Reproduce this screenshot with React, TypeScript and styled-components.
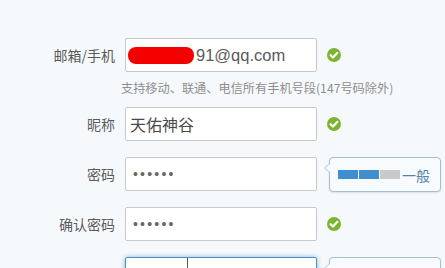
import React from "react";
import styled, { createGlobalStyle } from "styled-components";

const Global = createGlobalStyle`
  html, body { margin: 0; padding: 0; background: #f6f9fc; overflow: hidden; }
  body { font-family: "Liberation Sans", "Noto Sans CJK SC", sans-serif; }
`;

const Form = styled.div`
  display: flex;
  flex-direction: column;
  padding-top: 38px;
  width: 445px;
`;

const Row = styled.div<{ $gap?: number }>`
  display: flex;
  align-items: center;
  height: 34px;
  margin-bottom: ${(p) => (p.$gap ?? 16)}px;
`;

const Label = styled.div`
  width: 115px;
  margin-right: 10px;
  text-align: right;
  font-size: 14px;
  color: #5a5a5a;
  font-family: "Noto Sans CJK SC", sans-serif;
  line-height: 34px;
`;

const Field = styled.div<{ $focus?: boolean }>`
  box-sizing: border-box;
  width: 192px;
  height: 34px;
  background: #fff;
  border: 1px solid ${(p) => (p.$focus ? "#4f8fc4" : "#c8c8c8")};
  border-radius: 2px;
  box-shadow: ${(p) => (p.$focus ? "0 0 5px rgba(82,150,210,0.7)" : "none")};
  display: flex;
  align-items: center;
  padding-left: 4px;
  color: #5a5a5a;
  font-size: 16.5px;
  overflow: hidden;
`;

const Redact = styled.span`
  display: inline-block;
  width: 66px;
  height: 17px;
  border-radius: 8px;
  background: #f40000;
  margin-left: -2px;
  margin-right: 2px;
`;

const CjkValue = styled.span`
  font-family: "Noto Sans CJK SC", sans-serif;
  font-size: 16px;
  color: #4a4a4a;
`;

const Dots = styled.span`
  font-size: 14px;
  letter-spacing: 2.2px;
  color: #666;
  padding-left: 3px;
`;

const Check = styled.svg`
  margin-left: 10px;
  width: 14px;
  height: 14px;
  flex: none;
`;

const Hint = styled.div`
  margin-left: 121px;
  height: 35px;
  line-height: 20px;
  padding-top: 6px;
  box-sizing: border-box;
  font-size: 12.2px;
  color: #8e8e8e;
  font-family: "Noto Sans CJK SC", sans-serif;
  white-space: nowrap;
`;

const Tip = styled.div`
  position: relative;
  box-sizing: border-box;
  margin-left: 12px;
  width: 112px;
  height: 35px;
  margin-top: 1px;
  border: 1px solid #a6bfd3;
  border-radius: 4px;
  background: #f8fbfd;
  display: flex;
  align-items: center;
  padding-left: 8px;
  font-family: "Noto Sans CJK SC", sans-serif;
  font-size: 14px;
  color: #5584aa;
  box-shadow: 0 1px 2px rgba(120,150,180,0.25);
  &::before {
    content: "";
    position: absolute;
    left: -6px;
    top: 5px;
    border-style: solid;
    border-width: 5px 6px 5px 0;
    border-color: transparent #a6bfd3 transparent transparent;
  }
  &::after {
    content: "";
    position: absolute;
    left: -5px;
    top: 5px;
    border-style: solid;
    border-width: 5px 6px 5px 0;
    border-color: transparent #f8fbfd transparent transparent;
  }
`;

const Bars = styled.div`
  display: flex;
  gap: 1px;
  margin-right: 2px;
`;

const Bar = styled.span<{ $on: boolean }>`
  width: 20px;
  height: 9px;
  background: ${(p) => (p.$on ? "#3f8fd0" : "#c9c9c9")};
`;

const Code = styled.span`
  display: flex;
  align-items: center;
  height: 100%;
  width: 57px;
  border-right: 1px solid #555;
  font-size: 15px;
  color: #333;
  letter-spacing: 1px;
`;

const TipText = styled.span`
  color: #777;
`;

const CheckIcon = () => (
  <Check viewBox="0 0 14 14">
    <circle cx="7" cy="7" r="7" fill="#7cb432" />
    <path d="M3.6 7.2 L6 9.5 L10.4 4.8" fill="none" stroke="#fff" strokeWidth="2.2" strokeLinecap="round" strokeLinejoin="round" />
  </Check>
);

export default function App() {
  return (
    <>
      <Global />
      <Form>
        <Row $gap={0}>
          <Label>邮箱/手机</Label>
          <Field>
            <Redact />
            <span>91@qq.com</span>
          </Field>
          <CheckIcon />
        </Row>
        <Hint>支持移动、联通、电信所有手机号段(147号码除外)</Hint>
        <Row>
          <Label>昵称</Label>
          <Field>
            <CjkValue>天佑神谷</CjkValue>
          </Field>
          <CheckIcon />
        </Row>
        <Row>
          <Label>密码</Label>
          <Field>
            <Dots>••••••</Dots>
          </Field>
          <Tip>
            <Bars>
              <Bar $on />
              <Bar $on />
              <Bar $on={false} />
            </Bars>
            一般
          </Tip>
        </Row>
        <Row>
          <Label>确认密码</Label>
          <Field>
            <Dots>••••••</Dots>
          </Field>
          <CheckIcon />
        </Row>
        <Row>
          <Label>验证码</Label>
          <Field $focus>
            <Code>85Y88S</Code>
          </Field>
          <Tip>
            <TipText>请输入验证码</TipText>
          </Tip>
        </Row>
      </Form>
    </>
  );
}
